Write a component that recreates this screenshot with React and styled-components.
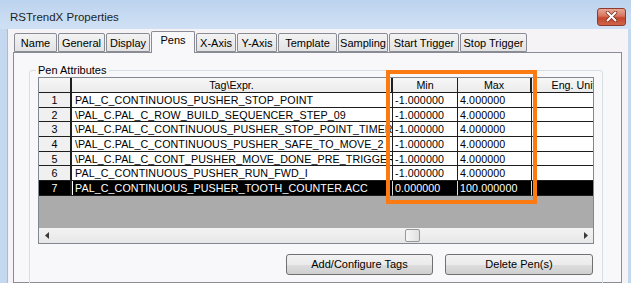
import styled, { createGlobalStyle } from 'styled-components'

const GlobalStyle = createGlobalStyle`
  html, body {
    margin: 0;
    padding: 0;
    background: #c4d8f0;
  }
  body {
    font-family: 'Liberation Sans', Arial, sans-serif;
  }
`

const tabs = [
    { label: 'Name', w: 43 },
    { label: 'General', w: 47 },
    { label: 'Display', w: 44 },
    { label: 'Pens', w: 44, sel: true },
    { label: 'X-Axis', w: 40 },
    { label: 'Y-Axis', w: 40 },
    { label: 'Template', w: 59 },
    { label: 'Sampling', w: 50 },
    { label: 'Start Trigger', w: 70 },
    { label: 'Stop Trigger', w: 67 },
]

const pens = [
    { tag: 'PAL_C_CONTINUOUS_PUSHER_STOP_POINT', min: '-1.000000', max: '4.000000' },
    { tag: '\\PAL_C.PAL_C_ROW_BUILD_SEQUENCER_STEP_09', min: '-1.000000', max: '4.000000' },
    { tag: '\\PAL_C.PAL_C_CONTINUOUS_PUSHER_STOP_POINT_TIMER', min: '-1.000000', max: '4.000000' },
    { tag: '\\PAL_C.PAL_C_CONTINUOUS_PUSHER_SAFE_TO_MOVE_2', min: '-1.000000', max: '4.000000' },
    { tag: '\\PAL_C.PAL_C_CONT_PUSHER_MOVE_DONE_PRE_TRIGGER', min: '-1.000000', max: '4.000000' },
    { tag: 'PAL_C_CONTINUOUS_PUSHER_RUN_FWD_I', min: '-1.000000', max: '4.000000' },
    { tag: 'PAL_C_CONTINUOUS_PUSHER_TOOTH_COUNTER.ACC', min: '0.000000', max: '100.000000', sel: true },
]

const Window = styled.div`
    position: relative;
    width: 631px;
    height: 283px;
    overflow: hidden;
    background: #c4d8f0;
    display: flex;
    flex-direction: column;
`

const TitleBar = styled.div`
    flex: none;
    height: 29px;
    box-sizing: border-box;
    padding: 4px 5px 0 10px;
    display: flex;
    align-items: center;
    justify-content: space-between;
    background: linear-gradient(#bcd3ee, #d0e1f5);
    color: #1e1e1e;
    font-size: 11.5px;
`

const CloseButton = styled.div`
    width: 29px;
    height: 18px;
    box-sizing: border-box;
    border: 1px solid #8d3b2c;
    border-radius: 3px;
    background: linear-gradient(#e8a896 0%, #d6735c 45%, #c4452c 55%, #d0644a 100%);
    display: flex;
    align-items: center;
    justify-content: center;
`

const Body = styled.div`
    flex: 1;
    min-height: 0;
    margin: 0 3px 0 7px;
    border-left: 1px solid #a8bcd4;
    background: #f5f3f6;
    padding: 2px 6px 0 5px;
    display: flex;
    flex-direction: column;
`

const TabStrip = styled.div`
    position: relative;
    z-index: 1;
    height: 21px;
    padding-left: 1px;
    display: flex;
    align-items: flex-end;
`

const Tab = styled.div`
    width: ${(p) => p.$w}px;
    height: ${(p) => (p.$sel ? 22 : 19)}px;
    margin-right: 1px;
    margin-bottom: ${(p) => (p.$sel ? -1 : 0)}px;
    box-sizing: border-box;
    border: 1px solid #898c95;
    border-bottom: ${(p) => (p.$sel ? 'none' : '1px solid #898c95')};
    border-radius: 2px 2px 0 0;
    background: ${(p) => (p.$sel ? '#f8f7f9' : 'linear-gradient(#f3f3f3, #e3e3e3)')};
    font-size: 11px;
    line-height: ${(p) => (p.$sel ? 16 : 18)}px;
    text-align: center;
    color: #000;
    white-space: nowrap;
`

const Panel = styled.div`
    flex: 1;
    min-height: 0;
    border: 1px solid #898c95;
    background: #f8f7f9;
    padding: 17px 18px 0 15px;
`

const GroupBox = styled.div`
    position: relative;
    border: 1px solid #d5dfe5;
    border-radius: 3px;
    padding: 6px 8px 20px 8px;
`

const Legend = styled.span`
    position: absolute;
    top: -7px;
    left: 6px;
    padding: 0 2px;
    background: #f8f7f9;
    font-size: 11px;
    line-height: 13px;
    color: #000;
`

const Grid = styled.div`
    border: 1px solid #828790;
    overflow: hidden;
    display: flex;
    flex-direction: column;
`

const Row = styled.div`
    display: grid;
    grid-template-columns: 33px 321px 65px 74px 84px;
    width: max-content;
`

const HeaderCell = styled.div`
    height: 15px;
    box-sizing: border-box;
    border-bottom: 1px solid #1e1e1e;
    border-right: ${(p) => (p.$thick ? 2 : 1)}px solid #1e1e1e;
    background: linear-gradient(#f7f7f7, #ebebeb);
    font-size: 10.7px;
    line-height: 14px;
    text-align: center;
    color: #000;
    white-space: nowrap;
`

const NumCell = styled.div`
    height: 14.7px;
    box-sizing: border-box;
    border-bottom: 1px solid #1e1e1e;
    border-right: 2px solid #1e1e1e;
    background: ${(p) => (p.$sel ? '#000' : '#f0f0f0')};
    color: ${(p) => (p.$sel ? '#fff' : '#000')};
    font-size: 10.7px;
    line-height: 14px;
    text-align: center;
`

const Cell = styled.div`
    height: 14.7px;
    box-sizing: border-box;
    padding-left: ${(p) => (p.$tag ? 3 : 2)}px;
    border-bottom: 1px solid #1e1e1e;
    border-right: 1px solid ${(p) => (p.$sel ? '#d8d8d8' : '#1e1e1e')};
    background: ${(p) => (p.$sel ? '#000' : '#fff')};
    color: ${(p) => (p.$sel ? '#fff' : '#000')};
    box-shadow: ${(p) => (p.$sel && p.$tag ? 'inset 1px 0 0 #fff' : 'none')};
    font-size: 10.7px;
    letter-spacing: 0.1px;
    line-height: 14px;
    white-space: nowrap;
    overflow: hidden;
`

const EmptyArea = styled.div`
    height: 32px;
    background: #ababab;
`

const ScrollBar = styled.div`
    height: 15px;
    display: flex;
    align-items: center;
    background: linear-gradient(#f3f3f3, #e7e7e7);
`

const Arrow = styled.div`
    width: 15px;
    height: 15px;
    flex: none;
    display: flex;
    align-items: center;
    justify-content: center;
`

const Track = styled.div`
    flex: 1;
    display: flex;
    align-items: center;
`

const Thumb = styled.div`
    width: 15px;
    height: 13px;
    margin-left: ${(p) => p.$at}px;
    box-sizing: border-box;
    border: 1px solid #979797;
    border-radius: 2px;
    background: linear-gradient(90deg, #f6f6f6, #e0e0e0);
`

const ButtonRow = styled.div`
    display: flex;
    justify-content: flex-end;
    gap: 12px;
    margin-top: 10px;
    padding-right: 1px;
`

const Button = styled.div`
    width: ${(p) => p.$w}px;
    height: 21px;
    box-sizing: border-box;
    border: 1px solid #707070;
    border-radius: 3px;
    background: linear-gradient(#f2f2f2 0%, #ebebeb 50%, #dddddd 51%, #cfcfcf 100%);
    font-size: 11px;
    line-height: 19px;
    text-align: center;
    color: #000;
`

/* annotation drawn over the Min/Max columns */
const Highlight = styled.div`
    position: absolute;
    left: 386px;
    top: 70px;
    width: 151px;
    height: 134px;
    box-sizing: border-box;
    border: 4px solid #fb7a12;
    pointer-events: none;
`

const CloseIcon = () => (
    <svg width="13" height="11" viewBox="0 0 13 11">
        <path d="M2.5 1.5 L10.5 9.5 M10.5 1.5 L2.5 9.5" stroke="#7a2a1c" strokeWidth="3.4" strokeLinecap="round" />
        <path d="M2.5 1.5 L10.5 9.5 M10.5 1.5 L2.5 9.5" stroke="#fff" strokeWidth="2" strokeLinecap="round" />
    </svg>
)

const ArrowIcon = ({ dir }) => (
    <svg width="4" height="7" viewBox="0 0 4 7">
        <polygon points={dir === 'left' ? '4,0 0,3.5 4,7' : '0,0 4,3.5 0,7'} fill="#3a3a3a" />
    </svg>
)

const App = () => {
    return (
        <Window>
            <GlobalStyle />
            <TitleBar>
                <span>RSTrendX Properties</span>
                <CloseButton>
                    <CloseIcon />
                </CloseButton>
            </TitleBar>
            <Body>
                <TabStrip>
                    {tabs.map((t) => (
                        <Tab key={t.label} $w={t.w} $sel={t.sel}>{t.label}</Tab>
                    ))}
                </TabStrip>
                <Panel>
                    <GroupBox>
                        <Legend>Pen Attributes</Legend>
                        <Grid>
                            <Row>
                                <HeaderCell $thick />
                                <HeaderCell $thick>Tag\Expr.</HeaderCell>
                                <HeaderCell>Min</HeaderCell>
                                <HeaderCell $thick>Max</HeaderCell>
                                <HeaderCell>Eng. Unit</HeaderCell>
                            </Row>
                            {pens.map((p, i) => (
                                <Row key={i}>
                                    <NumCell $sel={p.sel}>{i + 1}</NumCell>
                                    <Cell $tag $sel={p.sel}>{p.tag}</Cell>
                                    <Cell $sel={p.sel}>{p.min}</Cell>
                                    <Cell $sel={p.sel}>{p.max}</Cell>
                                    <Cell $sel={p.sel} />
                                </Row>
                            ))}
                            <EmptyArea />
                            <ScrollBar>
                                <Arrow><ArrowIcon dir="left" /></Arrow>
                                <Track>
                                    <Thumb $at={351} />
                                </Track>
                                <Arrow><ArrowIcon dir="right" /></Arrow>
                            </ScrollBar>
                        </Grid>
                        <ButtonRow>
                            <Button $w={147}>Add/Configure Tags</Button>
                            <Button $w={148}>Delete Pen(s)</Button>
                        </ButtonRow>
                    </GroupBox>
                </Panel>
            </Body>
            <Highlight />
        </Window>
    )
}

export default App
